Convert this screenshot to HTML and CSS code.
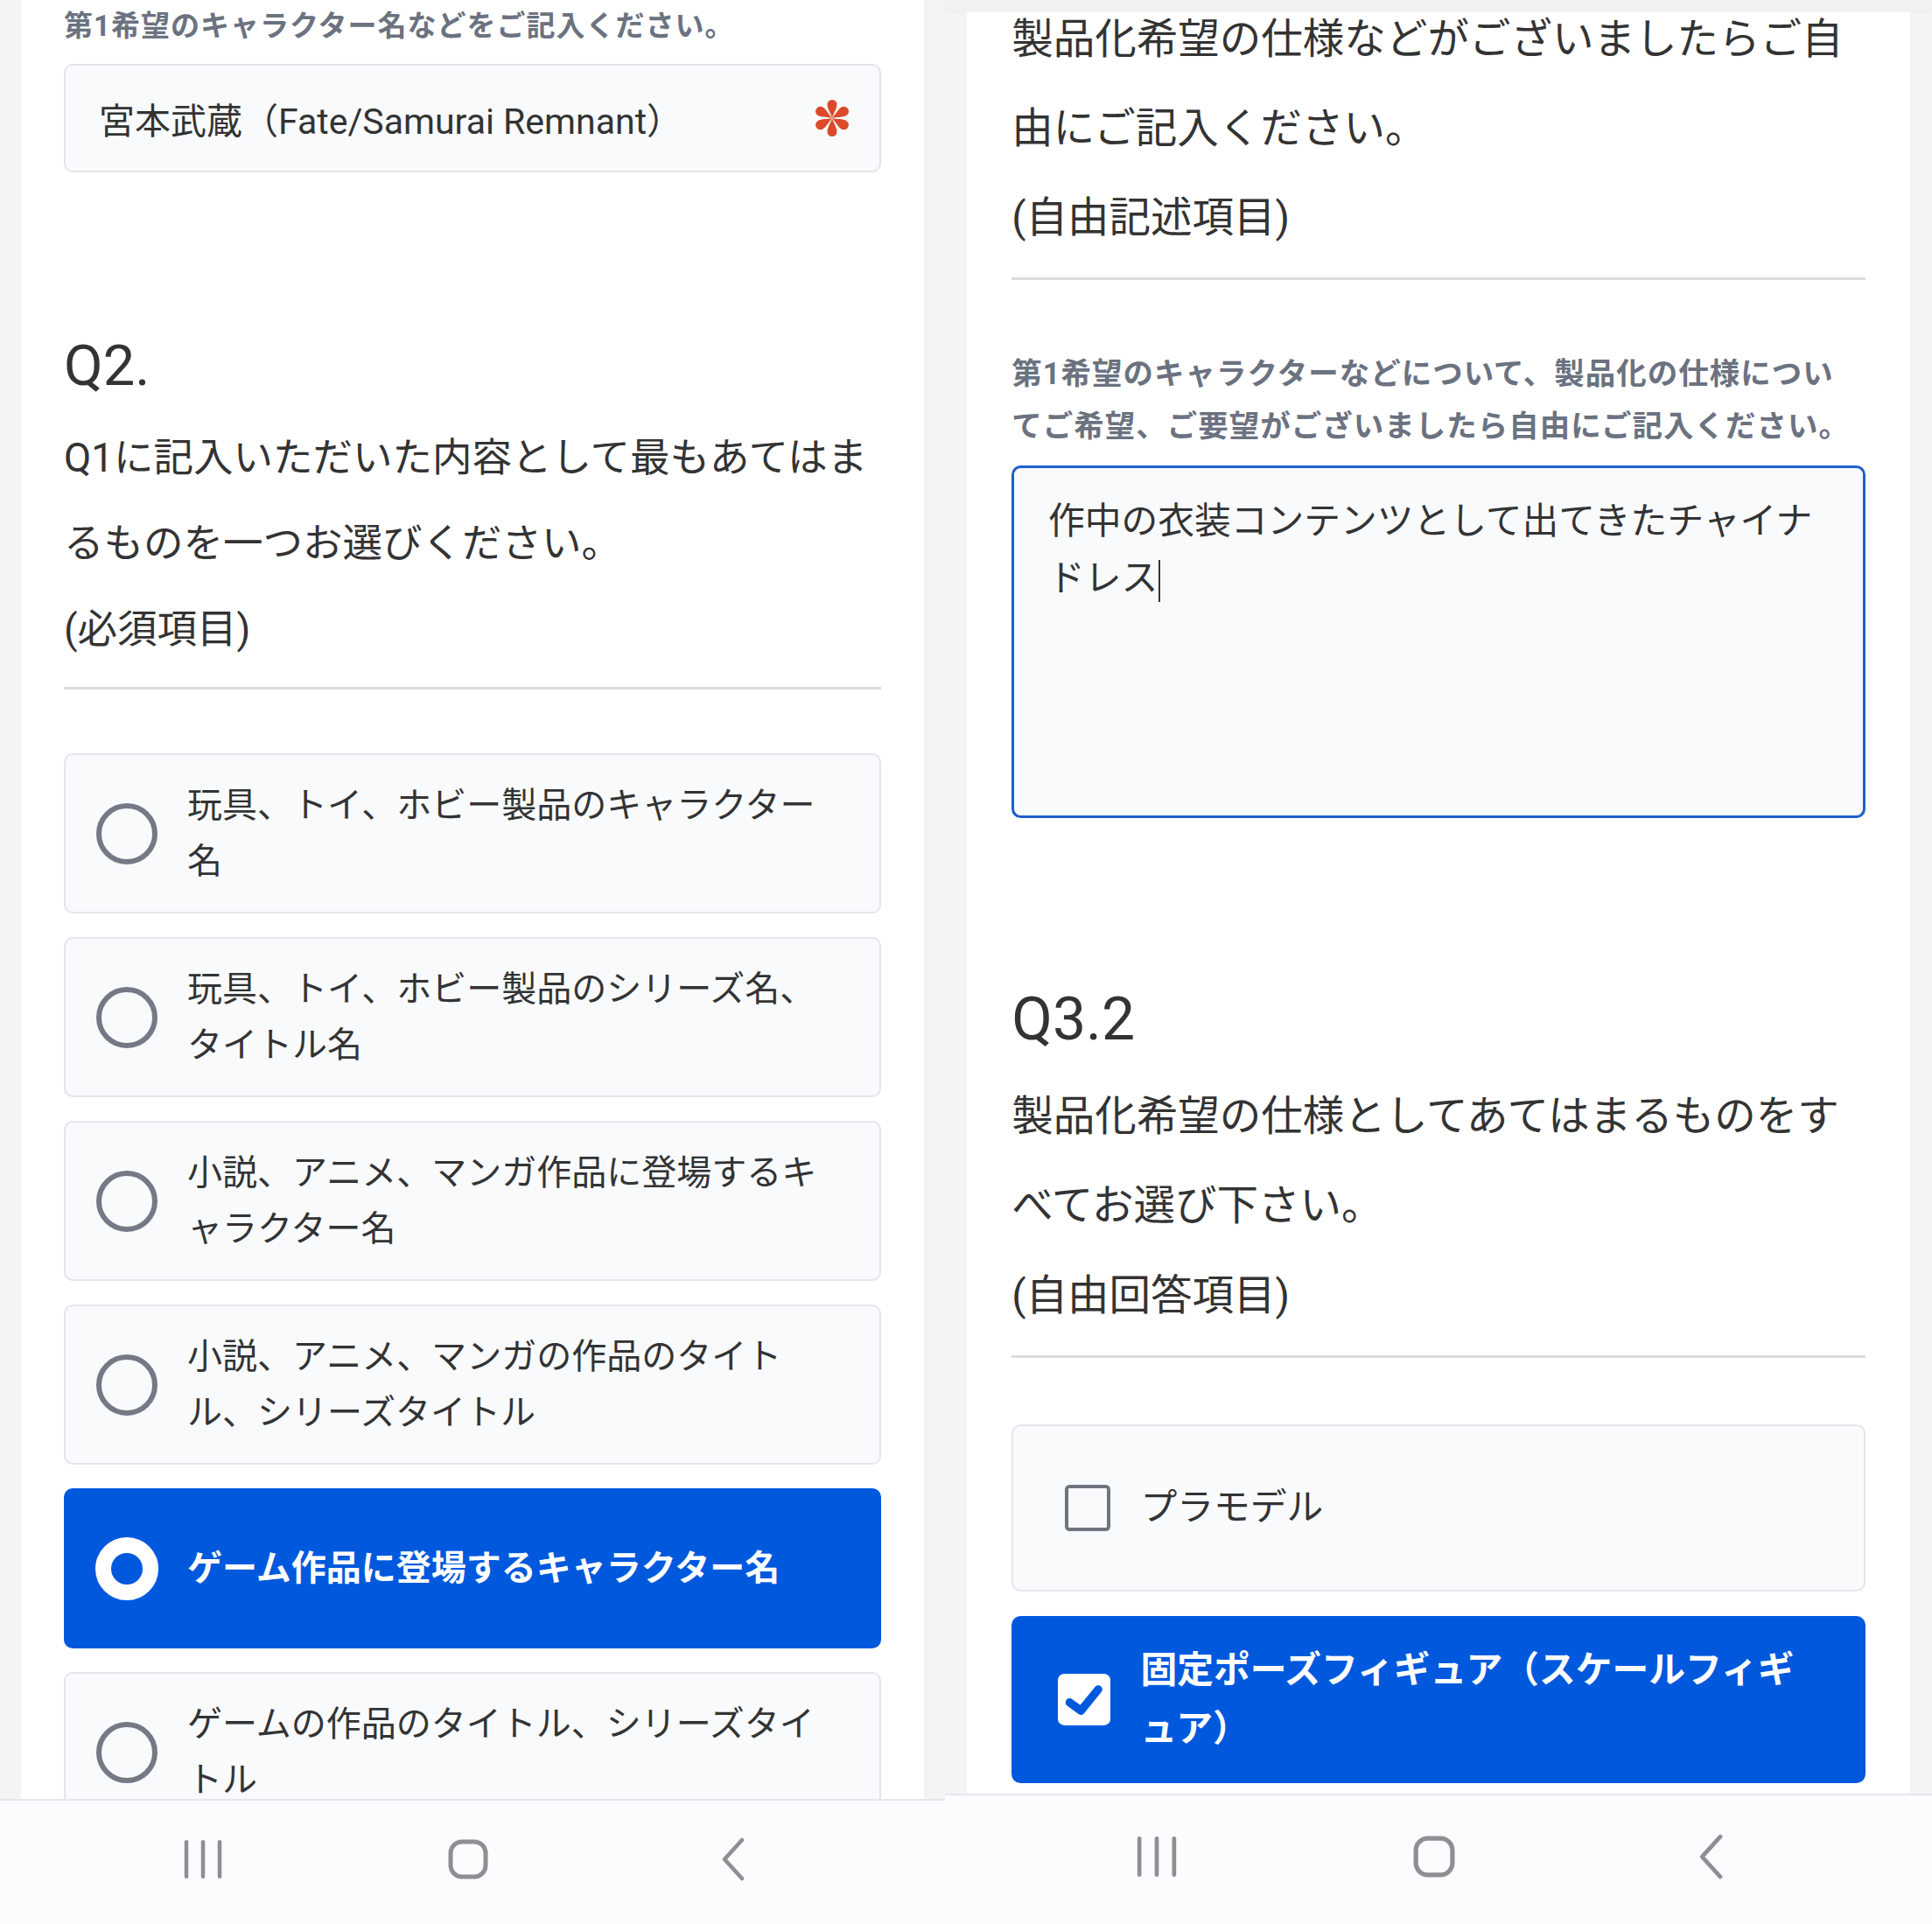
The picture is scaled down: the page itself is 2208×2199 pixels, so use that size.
FILE: index.html
```html
<!DOCTYPE html>
<html lang="ja">

<head>
    <meta charset="utf-8">
    <link rel="stylesheet" href="styles.css">
    <title>キャラクター製品化アンケート</title>
</head>

<body>
    <div class="screen">
        <div class="page">
            <div class="card card-q2">
                <div class="question">
                    <div class="answers">
                        <div class="field">
                            <p class="field-label">第1希望のキャラクター名などをご記入ください。</p>
                            <div class="text-input">
                                <span>宮本武蔵（Fate/Samurai Remnant）</span>
                                <svg class="required" viewBox="-22 -22 44 44" width="44" height="44">
                                    <defs>
                                        <path id="petal" d="M0 0 C-1.5 -5 -5.5 -11 -5.5 -15.5 A5.5 5.5 0 0 1 5.5 -15.5 C5.5 -11 1.5 -5 0 0 Z" />
                                    </defs>
                                    <g fill="#dc4a2a">
                                        <use href="#petal" />
                                        <use href="#petal" transform="rotate(60)" />
                                        <use href="#petal" transform="rotate(120)" />
                                        <use href="#petal" transform="rotate(180)" />
                                        <use href="#petal" transform="rotate(240)" />
                                        <use href="#petal" transform="rotate(300)" />
                                    </g>
                                </svg>
                            </div>
                        </div>
                    </div>
                </div>

                <div class="question">
                    <div class="q-head">
                        <h2 class="q-no">Q2.</h2>
                        <p class="q-text">Q1に記入いただいた内容として最もあてはまるものを一つお選びください。</p>
                        <p class="q-text">(必須項目)</p>
                    </div>
                    <div class="answers">
                        <label class="choice">
                            <span class="choice-mark"><span class="radio"></span></span>
                            <span class="choice-text">玩具、トイ、ホビー製品のキャラクター<br>名</span>
                        </label>
                        <label class="choice">
                            <span class="choice-mark"><span class="radio"></span></span>
                            <span class="choice-text">玩具、トイ、ホビー製品のシリーズ名、<br>タイトル名</span>
                        </label>
                        <label class="choice">
                            <span class="choice-mark"><span class="radio"></span></span>
                            <span class="choice-text">小説、アニメ、マンガ作品に登場するキ<br>ャラクター名</span>
                        </label>
                        <label class="choice">
                            <span class="choice-mark"><span class="radio"></span></span>
                            <span class="choice-text">小説、アニメ、マンガの作品のタイト<br>ル、シリーズタイトル</span>
                        </label>
                        <label class="choice is-selected">
                            <span class="choice-mark"><span class="radio"></span></span>
                            <span class="choice-text">ゲーム作品に登場するキャラクター名</span>
                        </label>
                        <label class="choice">
                            <span class="choice-mark"><span class="radio"></span></span>
                            <span class="choice-text">ゲームの作品のタイトル、シリーズタイ<br>トル</span>
                        </label>
                    </div>
                </div>
            </div>
        </div>
        <div class="navbar">
            <span class="nav-btn">
                <svg width="46" height="46" viewBox="0 0 46 46" fill="#8e8e93">
                    <rect x="1.75" y="1" width="4.5" height="44" rx="2.25" />
                    <rect x="20.75" y="1" width="4.5" height="44" rx="2.25" />
                    <rect x="39.75" y="1" width="4.5" height="44" rx="2.25" />
                </svg>
            </span>
            <span class="nav-btn">
                <svg width="46" height="46" viewBox="0 0 46 46">
                    <rect x="3" y="3" width="40" height="40" rx="13" fill="none" stroke="#8e8e93" stroke-width="5" />
                </svg>
            </span>
            <span class="nav-btn">
                <svg width="30" height="50" viewBox="0 0 30 50">
                    <path d="M25 3 L5 25 L25 47" fill="none" stroke="#8e8e93" stroke-width="4.5" stroke-linecap="round" stroke-linejoin="round" />
                </svg>
            </span>
        </div>
    </div>

    <div class="screen screen-wide">
        <div class="status-edge"></div>
        <div class="page">
            <div class="card card-q3">
                <div class="question">
                    <div class="q-head">
                        <p class="q-text">製品化希望の仕様などがございましたらご自由にご記入ください。</p>
                        <p class="q-text">(自由記述項目)</p>
                    </div>
                    <div class="answers">
                        <div class="field">
                            <p class="field-label">第1希望のキャラクターなどについて、製品化の仕様につい<br>てご希望、ご要望がございましたら自由にご記入ください。</p>
                            <div class="text-area">作中の衣装コンテンツとして出てきたチャイナドレス<span class="caret"></span></div>
                        </div>
                    </div>
                </div>

                <div class="question">
                    <div class="q-head">
                        <h2 class="q-no">Q3.2</h2>
                        <p class="q-text">製品化希望の仕様としてあてはまるものをすべてお選び下さい。</p>
                        <p class="q-text">(自由回答項目)</p>
                    </div>
                    <div class="answers">
                        <label class="choice">
                            <span class="choice-mark is-box"><span class="checkbox"></span></span>
                            <span class="choice-text">プラモデル</span>
                        </label>
                        <label class="choice is-selected">
                            <span class="choice-mark is-box">
                                <span class="checkbox is-checked">
                                    <svg width="57" height="57" viewBox="0 0 24 24">
                                        <path d="M5.4 13.2 L10.6 17 L18.6 7.2" fill="none" stroke="#0059dd" stroke-width="3.8" stroke-linecap="round" stroke-linejoin="round" />
                                    </svg>
                                </span>
                            </span>
                            <span class="choice-text">固定ポーズフィギュア（スケールフィギ<br>ュア）</span>
                        </label>
                    </div>
                </div>
            </div>
        </div>
        <div class="navbar">
            <span class="nav-btn">
                <svg width="46" height="46" viewBox="0 0 46 46" fill="#8e8e93">
                    <rect x="1.75" y="1" width="4.5" height="44" rx="2.25" />
                    <rect x="20.75" y="1" width="4.5" height="44" rx="2.25" />
                    <rect x="39.75" y="1" width="4.5" height="44" rx="2.25" />
                </svg>
            </span>
            <span class="nav-btn">
                <svg width="46" height="46" viewBox="0 0 46 46">
                    <rect x="3" y="3" width="40" height="40" rx="13" fill="none" stroke="#8e8e93" stroke-width="5" />
                </svg>
            </span>
            <span class="nav-btn">
                <svg width="30" height="50" viewBox="0 0 30 50">
                    <path d="M25 3 L5 25 L25 47" fill="none" stroke="#8e8e93" stroke-width="4.5" stroke-linecap="round" stroke-linejoin="round" />
                </svg>
            </span>
        </div>
    </div>
</body>

</html>
```

FILE: styles.css
```css
html {
    font-family: Roboto, "Noto Sans CJK JP", sans-serif;
    color: #333;
    background: #f4f4f5;
    -webkit-font-smoothing: antialiased;
}

body {
    margin: 0;
    display: flex;
    align-items: flex-start;
}

.screen {
    position: relative;
    width: 1080px;
    height: 2199px;
    display: flex;
    flex-direction: column;
    overflow: hidden;
    background: #f4f4f5;
}

.screen-wide {
    zoom: 1.0444;
    height: 2105.5px;
}

.status-edge {
    position: absolute;
    top: 0;
    left: 0;
    right: 0;
    height: 12px;
    background: #f1f1f3;
    box-shadow: 0 1px 2px rgba(0, 0, 0, 0.08);
    z-index: 2;
}

.page {
    flex: 1;
    min-height: 0;
    overflow: hidden;
    padding: 0 24px;
}

.card {
    background: #fff;
    padding: 0 49px 60px;
    min-height: 100%;
    box-sizing: border-box;
}

.card-q2 {
    padding-top: 1px;
}

.card-q3 {
    margin-top: -6px;
}

.question + .question {
    margin-top: 181px;
}

.q-head {
    padding-bottom: 16px;
    border-bottom: 3px solid #dcdcdf;
}

.q-no {
    margin: 0 0 17px;
    font-size: 65px;
    line-height: 80px;
    font-weight: 400;
}

.q-text {
    margin: 0;
    font-size: 45.5px;
    line-height: 98px;
}

.q-head + .answers {
    margin-top: 73px;
}

.answers {
    display: flex;
    flex-direction: column;
    gap: 27px;
}

.field-label {
    margin: 0 0 14px;
    font-size: 33px;
    line-height: 58px;
    font-weight: 700;
    letter-spacing: 1px;
    color: #6b7280;
}

.text-input {
    display: flex;
    align-items: center;
    justify-content: space-between;
    height: 124px;
    box-sizing: border-box;
    padding: 0 32px 0 38px;
    border: 2px solid #e3e5e9;
    border-radius: 10px;
    background: #f8fafc;
    font-size: 41px;
}

.required {
    flex: none;
}

.text-area {
    height: 385px;
    box-sizing: border-box;
    padding: 26px 37px;
    border: 3px solid #1f5fcc;
    border-radius: 10px;
    background: #f8fafc;
    font-size: 40px;
    line-height: 63px;
}

.caret {
    display: inline-block;
    width: 2px;
    height: 46px;
    margin-left: 1px;
    background: #333;
    vertical-align: middle;
}

.choice {
    display: flex;
    align-items: center;
    min-height: 183px;
    box-sizing: border-box;
    padding: 24px 30px 24px 34px;
    border: 2px solid #e4e6ea;
    border-radius: 10px;
    background: #f8fafc;
    font-size: 40px;
    line-height: 64px;
}

.choice.is-selected {
    background: #0059dd;
    border-color: #0059dd;
    color: #fff;
    font-weight: 700;
}

.choice-mark {
    flex: none;
    width: 72px;
    display: flex;
    justify-content: center;
    margin-right: 33px;
}

.choice-mark.is-box {
    justify-content: flex-end;
}

.radio {
    width: 70px;
    height: 70px;
    box-sizing: border-box;
    border: 6px solid #747985;
    border-radius: 50%;
}

.is-selected .radio {
    width: 72px;
    height: 72px;
    border: 18px solid #fff;
    background: #0059dd;
}

.checkbox {
    width: 50px;
    height: 50px;
    box-sizing: border-box;
    border: 4px solid #6f7480;
    border-radius: 5px;
}

.checkbox.is-checked {
    width: 57px;
    height: 57px;
    display: flex;
    border: none;
    border-radius: 7px;
    background: #fff;
}

.navbar {
    flex: none;
    height: 143px;
    box-sizing: border-box;
    display: flex;
    justify-content: center;
    align-items: center;
    gap: 203px;
    padding: 0 10px 7px 0;
    background: #fcfbfd;
    border-top: 2px solid #e8e6ec;
}

.nav-btn {
    width: 100px;
    display: flex;
    justify-content: center;
}
```
